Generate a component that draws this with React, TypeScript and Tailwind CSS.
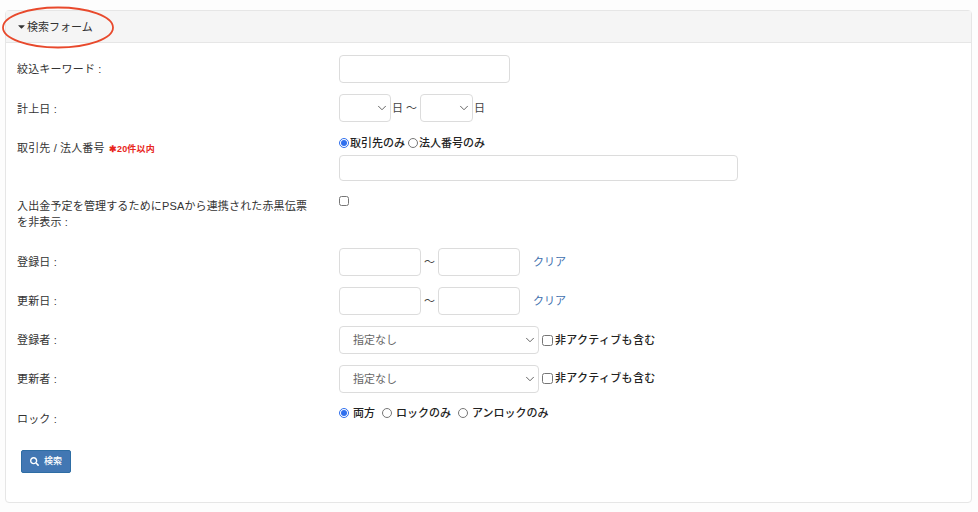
import { FaCaretDown, FaSearch } from 'react-icons/fa'
import { ChevronDown } from 'lucide-react'

const font = { fontFamily: '"Liberation Sans", "Noto Sans CJK JP", sans-serif' }

function Row({ label, className, children }: { label: React.ReactNode; className: string; children: React.ReactNode }) {
  return (
    <div className={`flex ${className}`}>
      <div className="w-[322px] shrink-0 pr-[20px] text-[11px] leading-[16px] tracking-[0.15px] text-[#333]">{label}</div>
      <div className="flex-1">{children}</div>
    </div>
  )
}

function TextBox({ className }: { className: string }) {
  return <input type="text" className={`rounded-[4px] border border-[#dcdcdc] bg-white ${className}`} />
}

function SelectBox({ className, text, chevronClass }: { className: string; text?: string; chevronClass: string }) {
  return (
    <div className={`flex items-center justify-between rounded-[4px] border border-[#dcdcdc] bg-white ${className}`}>
      <span className="pl-[13px] text-[11px] text-[#666]">{text}</span>
      <ChevronDown className={`h-[14px] w-[14px] text-[#444] ${chevronClass}`} strokeWidth={1.4} />
    </div>
  )
}

function DateRange() {
  return (
    <div className="flex h-[28px] items-center">
      <TextBox className="h-[28px] w-[82px]" />
      <span className="w-[17px] text-center text-[11px] text-[#444]">〜</span>
      <TextBox className="h-[28px] w-[82px]" />
      <a className="ml-[13px] text-[11px] text-[#3f6fae]">クリア</a>
    </div>
  )
}

function UserSelect({ boxClass }: { boxClass: string }) {
  return (
    <div className="flex h-[28px] items-center">
      <SelectBox className="h-[28px] w-[200px]" text="指定なし" chevronClass="mr-[1px]" />
      <input type="checkbox" className={`ml-[3px] h-[11px] w-[11px] accent-[#2f6fed] ${boxClass}`} />
      <span className={`ml-[2px] text-[11px] font-medium tracking-[0.3px] text-[#222] ${boxClass}`}>非アクティブも含む</span>
    </div>
  )
}

export default function App() {
  return (
    <div className="relative h-[512px] w-[978px] overflow-hidden bg-[#fdfdfd] pl-[5px] pr-[6px] pt-[10px]" style={font}>
      <div className="h-[493px] rounded-[4px] border border-[#e6e6e6] bg-white">
        <div className="flex h-[32px] items-center border-b border-[#e6e6e6] bg-[#f5f5f5] pl-[11px] text-[11px] text-[#333]">
          <FaCaretDown className="h-[11px] w-[9px]" />
          <span className="ml-[1px] pt-[1px]">検索フォーム</span>
        </div>

        <div className="pl-[11px] pt-[12px]">
          <Row label={<div className="pt-[6px]">絞込キーワード :</div>} className="mb-[11px]">
            <TextBox className="block h-[28px] w-[171px]" />
          </Row>

          <Row label={<div className="pt-[7px]">計上日 :</div>} className="mb-[13px]">
            <div className="flex h-[28px] items-center text-[11px] text-[#444]">
              <SelectBox className="h-[28px] w-[52px]" chevronClass="mr-[1px]" />
              <span className="ml-[1px]">日</span>
              <span className="w-[17px] text-center">〜</span>
              <SelectBox className="h-[28px] w-[53px]" chevronClass="mr-[1px]" />
              <span className="ml-[1px]">日</span>
            </div>
          </Row>

          <Row
            label={
              <div className="pt-[5px]">
                取引先 / 法人番号 <span className="ml-[1px] text-[9px] font-bold text-[#e8261c]">✱20件以内</span>
              </div>
            }
            className="mb-[14px]"
          >
            <div className="flex h-[16px] items-center text-[11px] font-medium text-[#222]">
              <input type="radio" name="partner" defaultChecked className="h-[10px] w-[10px] accent-[#2f6fed]" />
              <span className="ml-[1px]">取引先のみ</span>
              <input type="radio" name="partner" className="ml-[3px] h-[10px] w-[10px] accent-[#2f6fed]" />
              <span className="ml-[1px]">法人番号のみ</span>
            </div>
            <TextBox className="mt-[4px] block h-[26px] w-[399px]" />
          </Row>

          <Row
            label={
              <div className="w-[292px] pt-[3px]">入出金予定を管理するためにPSAから連携された赤黒伝票を非表示 :</div>
            }
            className="mb-[18px]"
          >
            <input type="checkbox" className="mt-[1px] block h-[10px] w-[10px] accent-[#2f6fed]" />
          </Row>

          <Row label={<div className="pt-[6px]">登録日 :</div>} className="mb-[11px]">
            <DateRange />
          </Row>
          <Row label={<div className="pt-[6px]">更新日 :</div>} className="mb-[11px]">
            <DateRange />
          </Row>
          <Row label={<div className="pt-[6px]">登録者 :</div>} className="mb-[11px]">
            <UserSelect boxClass="" />
          </Row>
          <Row label={<div className="pt-[6px]">更新者 :</div>} className="mb-[10px]">
            <UserSelect boxClass="-mt-[2px]" />
          </Row>

          <Row label={<div className="pt-[8px]">ロック :</div>} className="mb-[23px]">
            <div className="flex h-[20px] items-center text-[11px] font-medium text-[#222]">
              <input type="radio" name="lock" defaultChecked className="h-[10px] w-[10px] accent-[#2f6fed]" />
              <span className="ml-[4px]">両方</span>
              <input type="radio" name="lock" className="ml-[7px] h-[10px] w-[10px] accent-[#2f6fed]" />
              <span className="ml-[4px]">ロックのみ</span>
              <input type="radio" name="lock" className="ml-[7px] h-[10px] w-[10px] accent-[#2f6fed]" />
              <span className="ml-[4px]">アンロックのみ</span>
            </div>
          </Row>

          <button className="ml-[4px] flex h-[23px] w-[50px] items-center justify-center gap-[5px] rounded-[2px] border border-[#2e6da4] bg-[#4277b3] text-[9px] font-medium text-white">
            <FaSearch className="h-[9px] w-[9px]" />
            検索
          </button>
        </div>
      </div>

      {/* red marker circled over the form header */}
      <svg className="absolute left-0 top-0" width="120" height="52" viewBox="0 0 120 52" fill="none">
        <ellipse cx="58" cy="27.5" rx="55" ry="20" stroke="#e8492c" strokeWidth="1.8" />
      </svg>
    </div>
  )
}
